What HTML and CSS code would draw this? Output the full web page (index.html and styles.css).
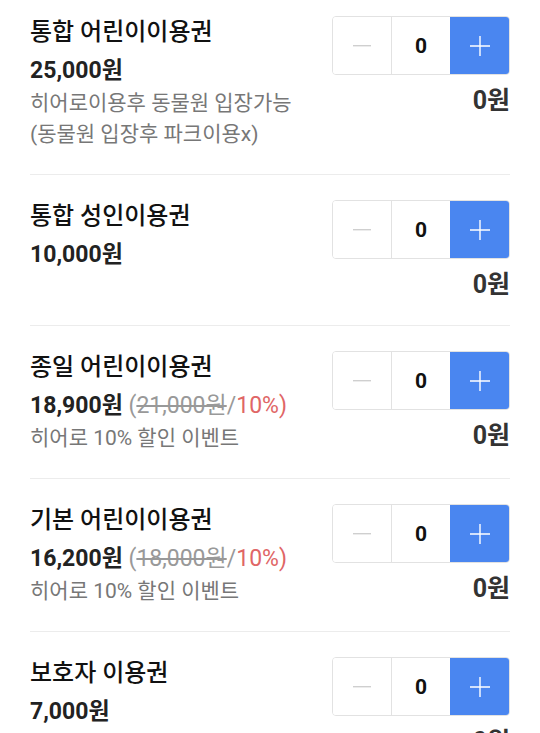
FILE: index.html
```html
<!DOCTYPE html>
<html lang="ko">
<head>
    <meta charset="UTF-8">
    <meta name="viewport" content="width=device-width, initial-scale=1.0">
    <title>이용권 선택</title>
    <link rel="stylesheet" href="styles.css">
</head>
<body>
    <div class="ticket-list">
        <div class="ticket">
            <div class="ticket-info">
                <div class="ticket-name">통합 어린이이용권</div>
                <div class="ticket-price">25,000원</div>
                <p class="ticket-desc">히어로이용후 동물원 입장가능<br>(동물원 입장후 파크이용x)</p>
            </div>
            <div class="ticket-side">
                <div class="stepper">
                    <button class="step-btn minus"><svg width="18" height="2" viewBox="0 0 18 2"><rect width="18" height="1.4" fill="#cfcfcf"/></svg></button>
                    <span class="count">0</span>
                    <button class="step-btn plus"><svg width="20" height="20" viewBox="0 0 20 20"><path d="M10 0v20M0 10h20" stroke="#fff" stroke-width="1.4"/></svg></button>
                </div>
                <div class="ticket-total">0원</div>
            </div>
        </div>

        <div class="ticket">
            <div class="ticket-info">
                <div class="ticket-name">통합 성인이용권</div>
                <div class="ticket-price">10,000원</div>
            </div>
            <div class="ticket-side">
                <div class="stepper">
                    <button class="step-btn minus"><svg width="18" height="2" viewBox="0 0 18 2"><rect width="18" height="1.4" fill="#cfcfcf"/></svg></button>
                    <span class="count">0</span>
                    <button class="step-btn plus"><svg width="20" height="20" viewBox="0 0 20 20"><path d="M10 0v20M0 10h20" stroke="#fff" stroke-width="1.4"/></svg></button>
                </div>
                <div class="ticket-total">0원</div>
            </div>
        </div>

        <div class="ticket">
            <div class="ticket-info">
                <div class="ticket-name">종일 어린이이용권</div>
                <div class="ticket-price">18,900원 <span class="discount">(<s>21,000원</s>/<em>10%)</em></span></div>
                <p class="ticket-desc">히어로 10% 할인 이벤트</p>
            </div>
            <div class="ticket-side">
                <div class="stepper">
                    <button class="step-btn minus"><svg width="18" height="2" viewBox="0 0 18 2"><rect width="18" height="1.4" fill="#cfcfcf"/></svg></button>
                    <span class="count">0</span>
                    <button class="step-btn plus"><svg width="20" height="20" viewBox="0 0 20 20"><path d="M10 0v20M0 10h20" stroke="#fff" stroke-width="1.4"/></svg></button>
                </div>
                <div class="ticket-total">0원</div>
            </div>
        </div>

        <div class="ticket">
            <div class="ticket-info">
                <div class="ticket-name">기본 어린이이용권</div>
                <div class="ticket-price">16,200원 <span class="discount">(<s>18,000원</s>/<em>10%)</em></span></div>
                <p class="ticket-desc">히어로 10% 할인 이벤트</p>
            </div>
            <div class="ticket-side">
                <div class="stepper">
                    <button class="step-btn minus"><svg width="18" height="2" viewBox="0 0 18 2"><rect width="18" height="1.4" fill="#cfcfcf"/></svg></button>
                    <span class="count">0</span>
                    <button class="step-btn plus"><svg width="20" height="20" viewBox="0 0 20 20"><path d="M10 0v20M0 10h20" stroke="#fff" stroke-width="1.4"/></svg></button>
                </div>
                <div class="ticket-total">0원</div>
            </div>
        </div>

        <div class="ticket">
            <div class="ticket-info">
                <div class="ticket-name">보호자 이용권</div>
                <div class="ticket-price">7,000원</div>
            </div>
            <div class="ticket-side">
                <div class="stepper">
                    <button class="step-btn minus"><svg width="18" height="2" viewBox="0 0 18 2"><rect width="18" height="1.4" fill="#cfcfcf"/></svg></button>
                    <span class="count">0</span>
                    <button class="step-btn plus"><svg width="20" height="20" viewBox="0 0 20 20"><path d="M10 0v20M0 10h20" stroke="#fff" stroke-width="1.4"/></svg></button>
                </div>
                <div class="ticket-total">0원</div>
            </div>
        </div>
    </div>
</body>
</html>
```

FILE: styles.css
```css
* {
    margin: 0;
    padding: 0;
    box-sizing: border-box;
}

body {
    font-family: Roboto, "Noto Sans CJK KR", sans-serif;
    background: white;
    color: #111;
}

.ticket-list {
    padding: 0 30px;
}

.ticket {
    display: flex;
    justify-content: space-between;
    align-items: flex-start;
    padding: 25px 0 24px;
    border-bottom: 1px solid #ececec;
}

.ticket:first-child {
    padding-top: 16px;
}

.ticket-name {
    font-size: 24px;
    font-weight: 500;
    line-height: 32px;
    color: #111;
}

.ticket-price {
    margin-top: 7px;
    font-size: 23px;
    font-weight: 700;
    line-height: 32px;
    color: #222;
}

.discount {
    font-weight: 400;
    color: #999;
}

.discount s {
    text-decoration-thickness: 1.5px;
}

.discount em {
    font-style: normal;
    color: #e06666;
}

.ticket-desc {
    margin-top: 1px;
    font-size: 21px;
    line-height: 31px;
    color: #777;
}

.ticket-side {
    display: flex;
    flex-direction: column;
    align-items: flex-end;
}

.stepper {
    display: flex;
    height: 59px;
    border: 1px solid #e2e2e2;
    border-radius: 4px;
    overflow: hidden;
}

.step-btn {
    width: 59px;
    border: none;
    background: white;
    display: flex;
    align-items: center;
    justify-content: center;
}

.step-btn.minus {
    border-right: 1px solid #e2e2e2;
}

.step-btn.plus {
    width: 60px;
    background: #4a86f0;
    margin: -1px -1px -1px 0;
}

.count {
    width: 58px;
    display: flex;
    align-items: center;
    justify-content: center;
    font-size: 21px;
    font-weight: 700;
    color: #111;
}

.ticket-total {
    margin-top: 10px;
    font-size: 25px;
    font-weight: 700;
    line-height: 32px;
    color: #333;
}
```
